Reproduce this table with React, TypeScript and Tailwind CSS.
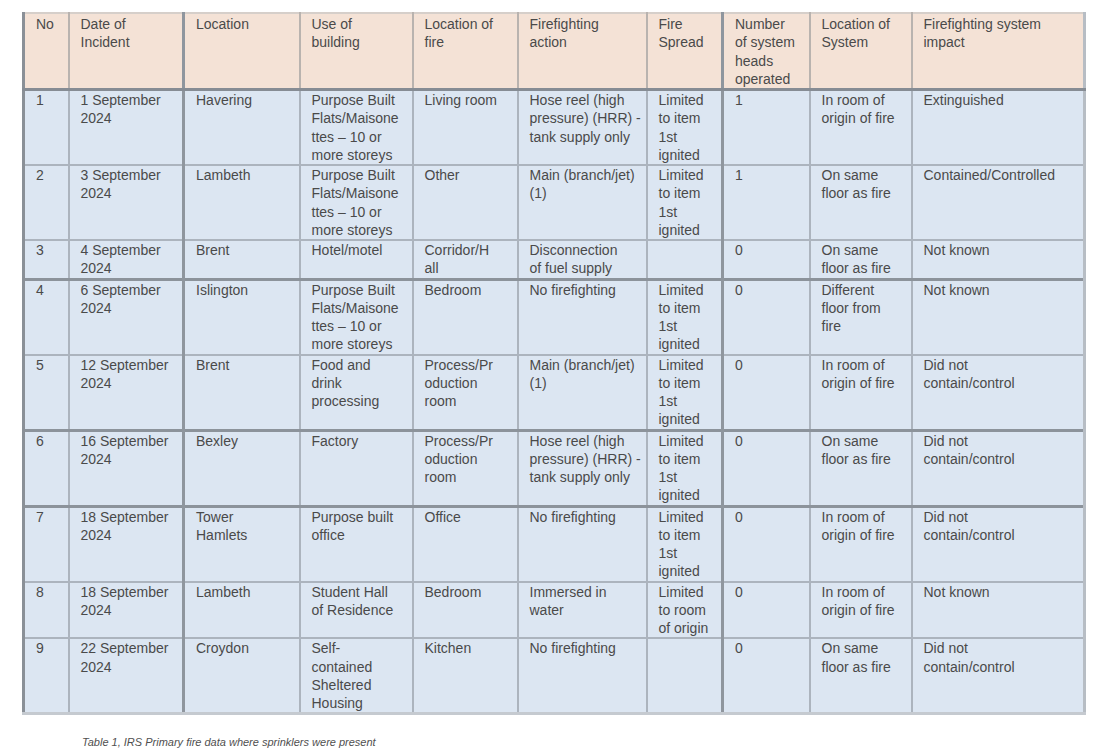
import React from "react";

const cols = [45, 115, 116, 113, 105, 129, 76, 87, 102, 173];

const header: string[][] = [
  ["No"],
  ["Date of", "Incident"],
  ["Location"],
  ["Use of", "building"],
  ["Location of", "fire"],
  ["Firefighting", "action"],
  ["Fire", "Spread"],
  ["Number", "of system", "heads", "operated"],
  ["Location of", "System"],
  ["Firefighting system", "impact"],
];

const PBF = ["Purpose Built", "Flats/Maisone", "ttes – 10 or", "more storeys"];
const LIM = ["Limited", "to item", "1st", "ignited"];
const HRR = ["Hose reel (high", "pressure) (HRR) -", "tank supply only"];

const rows: { cells: string[][]; dark?: boolean }[] = [
  {
    cells: [["1"], ["1 September", "2024"], ["Havering"], PBF, ["Living room"], HRR, LIM, ["1"], ["In room of", "origin of fire"], ["Extinguished"]],
  },
  {
    cells: [["2"], ["3 September", "2024"], ["Lambeth"], PBF, ["Other"], ["Main (branch/jet)", "(1)"], LIM, ["1"], ["On same", "floor as fire"], ["Contained/Controlled"]],
  },
  {
    cells: [["3"], ["4 September", "2024"], ["Brent"], ["Hotel/motel"], ["Corridor/H", "all"], ["Disconnection", "of fuel supply"], [""], ["0"], ["On same", "floor as fire"], ["Not known"]],
  },
  {
    dark: true,
    cells: [["4"], ["6 September", "2024"], ["Islington"], PBF, ["Bedroom"], ["No firefighting"], LIM, ["0"], ["Different", "floor from", "fire"], ["Not known"]],
  },
  {
    cells: [["5"], ["12 September", "2024"], ["Brent"], ["Food and", "drink", "processing"], ["Process/Pr", "oduction", "room"], ["Main (branch/jet)", "(1)"], LIM, ["0"], ["In room of", "origin of fire"], ["Did not", "contain/control"]],
  },
  {
    dark: true,
    cells: [["6"], ["16 September", "2024"], ["Bexley"], ["Factory"], ["Process/Pr", "oduction", "room"], HRR, LIM, ["0"], ["On same", "floor as fire"], ["Did not", "contain/control"]],
  },
  {
    dark: true,
    cells: [["7"], ["18 September", "2024"], ["Tower", "Hamlets"], ["Purpose built", "office"], ["Office"], ["No firefighting"], LIM, ["0"], ["In room of", "origin of fire"], ["Did not", "contain/control"]],
  },
  {
    cells: [["8"], ["18 September", "2024"], ["Lambeth"], ["Student Hall", "of Residence"], ["Bedroom"], ["Immersed in", "water"], ["Limited", "to room", "of origin"], ["0"], ["In room of", "origin of fire"], ["Not known"]],
  },
  {
    cells: [["9"], ["22 September", "2024"], ["Croydon"], ["Self-", "contained", "Sheltered", "Housing"], ["Kitchen"], ["No firefighting"], [""], ["0"], ["On same", "floor as fire"], ["Did not", "contain/control"]],
  },
];

const colBorder = [
  "border-l-[3px] border-l-[#8a9097]",
  "",
  "border-l-[3px] border-l-[#8f969e]",
  "",
  "",
  "",
  "",
  "border-l-[3px] border-l-[#8f969e]",
  "",
  "border-r-[3px] border-r-[#b7bdc4]",
];

function Lines({ lines }: { lines: string[] }) {
  return (
    <>
      {lines.map((l, i) => (
        <React.Fragment key={i}>
          {i > 0 && <br />}
          {l}
        </React.Fragment>
      ))}
    </>
  );
}

export default function App() {
  return (
    <div className="min-h-[752px] w-[1100px] bg-white pl-[22px] pt-[12px] font-['Liberation_Sans',Arial,sans-serif] text-[#4a4a4a]">
      <table className="w-[1061px] table-fixed border-collapse text-[14px] leading-[18.25px]">
        <colgroup>
          {cols.map((w, i) => (
            <col key={i} style={{ width: w }} />
          ))}
        </colgroup>
        <thead>
          <tr className="bg-[#f4e2d6]">
            {header.map((h, i) => (
              <th
                key={i}
                className={`overflow-hidden whitespace-nowrap border-2 border-[#b9b3af] border-t-[#d6cfca] border-b-[3px] border-b-[#868c94] px-[11px] pt-[1px] pb-0 text-left align-top font-normal ${colBorder[i]}`}
              >
                <Lines lines={h} />
              </th>
            ))}
          </tr>
        </thead>
        <tbody>
          {rows.map((r, ri) => (
            <tr key={ri} className="bg-[#dce6f2]">
              {r.cells.map((c, ci) => (
                <td
                  key={ci}
                  className={`overflow-hidden whitespace-nowrap border-2 border-[#acb4be] px-[11px] py-0 text-left align-top ${colBorder[ci]} ${
                    r.dark ? "border-t-[3px] border-t-[#8c939b]" : ""
                  } ${ri === rows.length - 1 ? "border-b-[3px] border-b-[#c5cad0]" : ""}`}
                >
                  <Lines lines={c} />
                </td>
              ))}
            </tr>
          ))}
        </tbody>
      </table>
      <div className="mt-[20px] pl-[60px] text-[11px] italic leading-[14px] text-[#505050]">
        Table 1, IRS Primary fire data where sprinklers were present
      </div>
    </div>
  );
}
